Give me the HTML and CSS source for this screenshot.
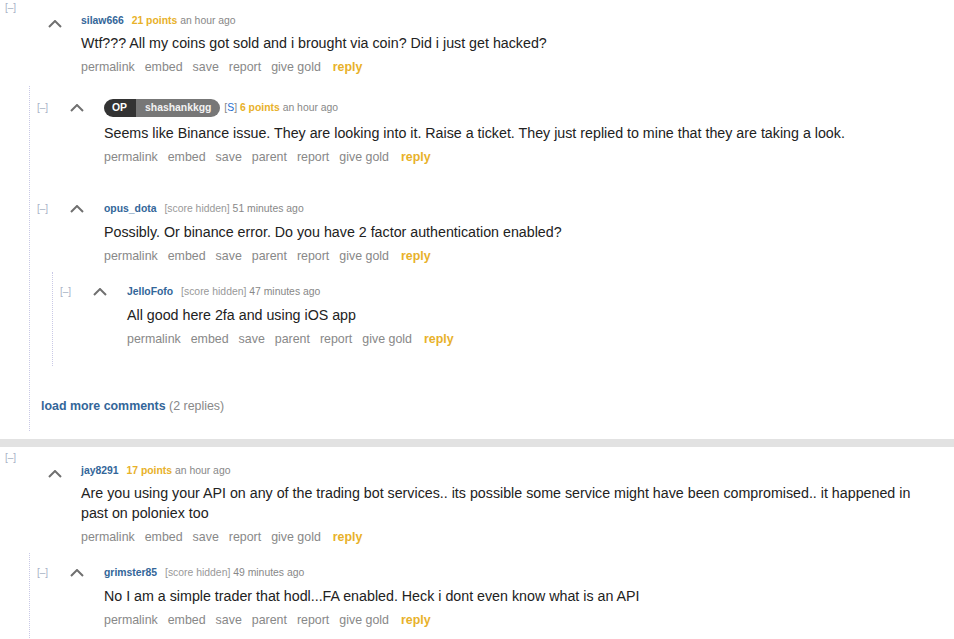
FILE: index.html
```html
<!DOCTYPE html>
<html>
<head>
<meta charset="utf-8">
<link rel="stylesheet" href="styles.css">
</head>
<body>
<div class="thread">
  <div class="comment top">
    <div class="row">
      <div class="toggle">[–]</div>
      <div class="midcol"><svg class="up" width="14" height="8" viewBox="0 0 14 8"><polyline points="1,7 7,1 13,7"/></svg></div>
      <div class="entry">
        <div class="tagline"><a class="author">silaw666</a> <span class="score">21 points</span> <span class="time">an hour ago</span></div>
        <p class="body">Wtf??? All my coins got sold and i brought via coin? Did i just get hacked?</p>
        <ul class="buttons"><li>permalink</li><li>embed</li><li>save</li><li>report</li><li>give gold</li><li class="reply">reply</li></ul>
      </div>
    </div>
    <div class="children first">
      <div class="comment child op">
        <div class="row">
          <div class="toggle">[–]</div>
          <div class="midcol"><svg class="up" width="14" height="8" viewBox="0 0 14 8"><polyline points="1,7 7,1 13,7"/></svg></div>
          <div class="entry">
            <div class="tagline"><span class="badge"><span class="badge-op">OP</span><span class="badge-name">shashankkgg</span></span> <span class="sub">[<span class="s">S</span>]</span> <span class="score">6 points</span> <span class="time">an hour ago</span></div>
            <p class="body">Seems like Binance issue. They are looking into it. Raise a ticket. They just replied to mine that they are taking a look.</p>
            <ul class="buttons"><li>permalink</li><li>embed</li><li>save</li><li>parent</li><li>report</li><li>give gold</li><li class="reply">reply</li></ul>
          </div>
        </div>
      </div>
      <div class="comment child">
        <div class="row">
          <div class="toggle">[–]</div>
          <div class="midcol"><svg class="up" width="14" height="8" viewBox="0 0 14 8"><polyline points="1,7 7,1 13,7"/></svg></div>
          <div class="entry">
            <div class="tagline"><a class="author">opus_dota</a> <span class="hidden">[score hidden]</span> <span class="time">51 minutes ago</span></div>
            <p class="body">Possibly. Or binance error. Do you have 2 factor authentication enabled?</p>
            <ul class="buttons"><li>permalink</li><li>embed</li><li>save</li><li>parent</li><li>report</li><li>give gold</li><li class="reply">reply</li></ul>
          </div>
        </div>
        <div class="children nested">
          <div class="comment child">
            <div class="row">
              <div class="toggle">[–]</div>
              <div class="midcol"><svg class="up" width="14" height="8" viewBox="0 0 14 8"><polyline points="1,7 7,1 13,7"/></svg></div>
              <div class="entry">
                <div class="tagline"><a class="author">JelloFofo</a> <span class="hidden">[score hidden]</span> <span class="time">47 minutes ago</span></div>
                <p class="body">All good here 2fa and using iOS app</p>
                <ul class="buttons"><li>permalink</li><li>embed</li><li>save</li><li>parent</li><li>report</li><li>give gold</li><li class="reply">reply</li></ul>
              </div>
            </div>
          </div>
        </div>
      </div>
      <div class="more"><a class="more-link">load more comments</a> <span class="more-count">(2 replies)</span></div>
    </div>
  </div>

  <div class="separator"></div>

  <div class="comment top">
    <div class="row">
      <div class="toggle">[–]</div>
      <div class="midcol"><svg class="up" width="14" height="8" viewBox="0 0 14 8"><polyline points="1,7 7,1 13,7"/></svg></div>
      <div class="entry">
        <div class="tagline"><a class="author">jay8291</a> <span class="score">17 points</span> <span class="time">an hour ago</span></div>
        <p class="body">Are you using your API on any of the trading bot services.. its possible some service might have been compromised.. it happened in past on poloniex too</p>
        <ul class="buttons"><li>permalink</li><li>embed</li><li>save</li><li>report</li><li>give gold</li><li class="reply">reply</li></ul>
      </div>
    </div>
    <div class="children second">
      <div class="comment child">
        <div class="row">
          <div class="toggle">[–]</div>
          <div class="midcol"><svg class="up" width="14" height="8" viewBox="0 0 14 8"><polyline points="1,7 7,1 13,7"/></svg></div>
          <div class="entry">
            <div class="tagline"><a class="author">grimster85</a> <span class="hidden">[score hidden]</span> <span class="time">49 minutes ago</span></div>
            <p class="body">No I am a simple trader that hodl...FA enabled. Heck i dont even know what is an API</p>
            <ul class="buttons"><li>permalink</li><li>embed</li><li>save</li><li>parent</li><li>report</li><li>give gold</li><li class="reply">reply</li></ul>
          </div>
        </div>
      </div>
    </div>
  </div>
</div>
</body>
</html>
```

FILE: styles.css
```css
html, body {
  margin: 0;
  padding: 0;
  background: #fff;
}
body {
  font-family: "Liberation Sans", Arial, sans-serif;
  color: #222;
  width: 954px;
  height: 639px;
  overflow: hidden;
}
.thread {
  display: flex;
  flex-direction: column;
}
.row {
  display: flex;
  align-items: flex-start;
}
.toggle {
  font-size: 10px;
  line-height: 14px;
  color: #a6b2c6;
  flex: none;
}
.midcol {
  flex: none;
}
.up {
  display: block;
  fill: none;
  stroke: #707070;
  stroke-width: 2;
}
.entry {
  flex: 1;
  min-width: 0;
}
.tagline {
  font-size: 10.4px;
  line-height: 14px;
  color: #888;
  white-space: nowrap;
}
.author {
  color: #369;
  font-weight: bold;
  margin-right: 5px;
}
.score {
  color: #e8b12a;
  font-weight: bold;
}
.time {
  color: #888;
}
.hidden {
  color: #999;
}
.sub {
  color: #888;
}
.sub .s {
  color: #1f6fd1;
}
.body {
  margin: 6px 0 0;
  font-size: 14.25px;
  line-height: 20px;
  color: #222;
  padding-right: 30px;
}
.buttons {
  list-style: none;
  margin: 6px 0 0;
  padding: 0;
  display: flex;
  gap: 10px;
  font-size: 12.4px;
  line-height: 16px;
  color: #888;
}
.buttons .reply {
  color: #e8b12a;
  font-weight: bold;
  margin-left: 2px;
}

/* top-level comments */
.comment.top {
  padding-left: 5px;
}
.comment.top > .row .toggle {
  width: 43px;
  margin-top: 1px;
}
.comment.top > .row .midcol {
  width: 33px;
  padding-top: 20px;
}
.comment.top > .row .entry {
  padding-top: 14px;
}
.comment.top > .row .body {
  margin-top: 5px;
}

/* children containers */
.children {
  border-left: 1px dotted #c9c9e6;
}
.children.first {
  margin-left: 24px;
  margin-top: 11px;
  padding-bottom: 17px;
}
.children.nested {
  margin-left: 15px;
  margin-top: 8px;
}
.children.second {
  margin-left: 24px;
  margin-top: 8px;
  padding-bottom: 30px;
}

.comment.child {
  padding-left: 7px;
  padding-top: 13px;
  padding-bottom: 24px;
}
.children.nested .comment.child {
  padding-bottom: 19px;
}
.comment.child > .row .toggle {
  width: 33px;
}
.comment.child > .row .midcol {
  width: 34px;
  padding-top: 3px;
}

/* OP badge */
.comment.op > .row .toggle {
  margin-top: 2px;
}
.comment.op > .row .midcol {
  padding-top: 5px;
}
.op .tagline {
  line-height: 18px;
}
.badge {
  display: inline-flex;
  height: 18px;
  border-radius: 9px;
  overflow: hidden;
  vertical-align: top;
  font-weight: bold;
  margin-right: 1px;
}
.badge-op {
  background: #333;
  color: #fff;
  padding: 0 9px 0 8px;
  line-height: 18px;
}
.badge-name {
  background: #777;
  color: #f2f2f2;
  padding: 0 9px 0 9px;
  line-height: 18px;
}

/* load more */
.more {
  padding-left: 11px;
  margin-top: 8px;
  font-size: 12.4px;
  line-height: 16px;
  color: #888;
}
.more-link {
  color: #369;
  font-weight: bold;
}

.separator {
  height: 8px;
  background: #e2e2e2;
  margin-top: 8px;
  margin-bottom: 3px;
}
```
